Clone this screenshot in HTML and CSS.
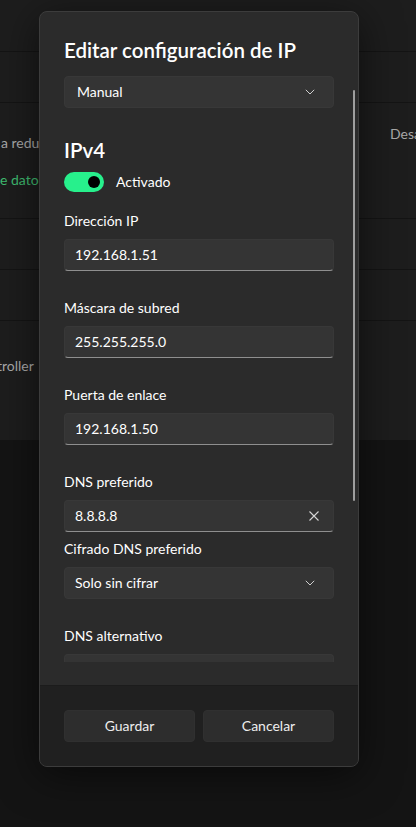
FILE: index.html
```html
<!DOCTYPE html>
<html lang="es">
<head>
<meta charset="utf-8">
<title>Editar configuración de IP</title>
<link rel="stylesheet" href="styles.css">
</head>
<body>
<div class="page">
  <div class="row r1"></div>
  <div class="row r2"></div>
  <div class="row r3">
    <div class="bg-left">
      <span class="bg-text">a reduci</span>
      <span class="bg-link">e dato</span>
    </div>
    <span class="bg-right">Desa</span>
  </div>
  <div class="row r4"></div>
  <div class="row r5"></div>
  <div class="row r6">
    <div class="bg-left">
      <span class="bg-text ctrl">troller</span>
    </div>
  </div>
  <div class="rest"></div>
</div>

<div class="dialog">
  <div class="content">
    <h1 class="title">Editar configuración de IP</h1>
    <div class="select">
      <span>Manual</span>
      <svg class="chev" width="10" height="6" viewBox="0 0 10 6"><path d="M0.8 0.8 L5 5 L9.2 0.8" fill="none" stroke="#cfcfcf" stroke-width="1"/></svg>
    </div>

    <h2 class="section">IPv4</h2>
    <div class="toggle-row">
      <div class="toggle"><div class="knob"></div></div>
      <span>Activado</span>
    </div>

    <div class="field">
      <label>Dirección IP</label>
      <div class="input">192.168.1.51</div>
    </div>
    <div class="field">
      <label>Máscara de subred</label>
      <div class="input">255.255.255.0</div>
    </div>
    <div class="field">
      <label>Puerta de enlace</label>
      <div class="input">192.168.1.50</div>
    </div>
    <div class="field tight">
      <label>DNS preferido</label>
      <div class="input focus">
        <span>8.8.8.8</span>
        <svg class="clear" width="10" height="10" viewBox="0 0 10 10"><path d="M0.5 0.5 L9.5 9.5 M9.5 0.5 L0.5 9.5" fill="none" stroke="#d6d6d6" stroke-width="1.1"/></svg>
      </div>
    </div>
    <div class="field">
      <label>Cifrado DNS preferido</label>
      <div class="select">
        <span>Solo sin cifrar</span>
        <svg class="chev" width="10" height="6" viewBox="0 0 10 6"><path d="M0.8 0.8 L5 5 L9.2 0.8" fill="none" stroke="#cfcfcf" stroke-width="1"/></svg>
      </div>
    </div>
    <div class="field">
      <label>DNS alternativo</label>
      <div class="input"></div>
    </div>
    <div class="thumb"></div>
  </div>
  <div class="footer">
    <button class="btn">Guardar</button>
    <button class="btn">Cancelar</button>
  </div>
</div>
</body>
</html>
```

FILE: styles.css
```css
* { box-sizing: border-box; }
html, body {
  margin: 0;
  padding: 0;
  background: #141414;
  font-family: "Segoe UI", Lato, "Noto Sans", sans-serif;
  color: #ffffff;
}
.page {
  width: 416px;
  height: 827px;
  display: flex;
  flex-direction: column;
  overflow: hidden;
}
.row {
  background: #1d1d1d;
  border-bottom: 1px solid #141414;
  display: flex;
  align-items: flex-start;
  justify-content: space-between;
}
.r1 { height: 52px; }
.r2 { height: 51px; }
.r3 { height: 116px; }
.r4 { height: 51px; }
.r5 { height: 51px; }
.r6 { height: 119px; border-bottom: none; }
.rest { flex: 1; background: #141414; }

.bg-left {
  display: flex;
  flex-direction: column;
  width: 39px;
  overflow: hidden;
  padding-top: 30px;
  gap: 17px;
  white-space: nowrap;
}
.bg-text { font-size: 14px; line-height: 20px; color: #a8a8a8; margin-left: 1px; }
.bg-link { font-size: 14px; line-height: 20px; color: #3fbb70; margin-left: 0; }
.bg-right {
  font-size: 14px; line-height: 20px; color: #a8a8a8;
  margin-top: 21px;
  width: 26px;
  overflow: hidden;
  white-space: nowrap;
}
.ctrl { margin-top: 5px; margin-left: -3px; }

.dialog {
  position: absolute;
  left: 39px;
  top: 11px;
  width: 320px;
  height: 756px;
  background: #2b2b2b;
  border: 1px solid #3c3c3c;
  border-radius: 8px;
  overflow: hidden;
  display: flex;
  flex-direction: column;
  box-shadow: 0 8px 40px rgba(0,0,0,0.55);
}
.content {
  position: relative;
  height: 650px;
  padding: 24px 24px 0 24px;
  overflow: hidden;
  flex: none;
}
.title {
  margin: 0;
  font-size: 20.5px;
  line-height: 28px;
  font-weight: 600;
}
.select, .input {
  height: 32px;
  background: #343434;
  border-radius: 4px;
  display: flex;
  align-items: center;
  justify-content: space-between;
  padding: 0 16px 1px 10px;
  font-size: 14px;
  color: #ffffff;
}
.title + .select { margin-top: 12px; padding-left: 12px; }
.select { border: 1px solid #383838; }
.input {
  border: 1px solid #383838;
  border-bottom: 1px solid #8f8f8f;
  padding-right: 14px;
}
.chev { flex: none; margin-right: 2px; margin-top: 1px; }
.clear { flex: none; margin-top: 1px; }
.section {
  margin: 28px 0 0 0;
  font-size: 20.5px;
  line-height: 28px;
  font-weight: 600;
}
.toggle-row {
  margin-top: 8px;
  display: flex;
  align-items: center;
  gap: 12px;
  font-size: 14px;
  line-height: 20px;
}
.toggle {
  width: 40px;
  height: 20px;
  border-radius: 10px;
  background: #27f08c;
  display: flex;
  align-items: center;
  justify-content: flex-end;
  padding-right: 4px;
}
.knob {
  width: 12px;
  height: 12px;
  border-radius: 50%;
  background: #000;
}
.field { margin-top: 20px; }
.field + .field { margin-top: 28px; }
.field.tight + .field { margin-top: 8px; }
.field label {
  display: block;
  font-size: 14px;
  line-height: 20px;
  margin-bottom: 7px;
  padding-bottom: 1px;
  margin-top: -1px;
}
.thumb {
  position: absolute;
  left: 313px;
  top: 78px;
  width: 2px;
  height: 411px;
  border-radius: 1px;
  background: #9e9e9e;
}
.footer {
  flex: 1;
  background: #202020;
  border-top: 1px solid #1c1c1c;
  margin-top: 23px;
  display: grid;
  grid-template-columns: 1fr 1fr;
  gap: 8px;
  padding: 24px 24px 0 24px;
  align-content: start;
}
.btn {
  height: 32px;
  border: 1px solid #303030;
  border-radius: 4px;
  background: #2d2d2d;
  color: #ededed;
  font-family: inherit;
  font-size: 14px;
  padding-bottom: 2px;
}
```
